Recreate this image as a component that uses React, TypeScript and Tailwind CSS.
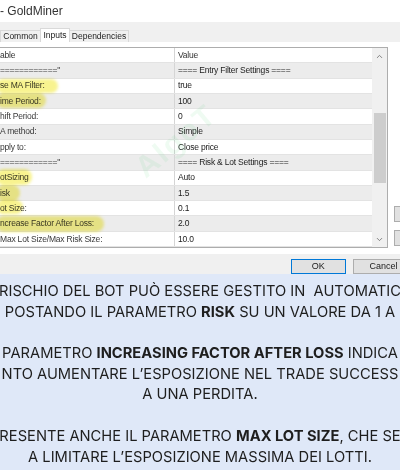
import { ChevronUp, ChevronDown } from 'lucide-react';

type Row = { name: string; value: string };

const rows: Row[] = [
  { name: '============"', value: '==== Entry Filter Settings ====' },
  { name: 'se MA Filter:', value: 'true' },
  { name: 'ime Period:', value: '100' },
  { name: 'hift Period:', value: '0' },
  { name: 'A method:', value: 'Simple' },
  { name: 'pply to:', value: 'Close price' },
  { name: '============"', value: '==== Risk & Lot Settings ====' },
  { name: 'otSizing', value: 'Auto' },
  { name: 'isk', value: '1.5' },
  { name: 'ot Size:', value: '0.1' },
  { name: 'ncrease Factor After Loss:', value: '2.0' },
  { name: 'Max Lot Size/Max Risk Size:', value: '10.0' },
];

// evidenziatore giallo sopra le righe
const marks = [
  'left-[-4px] top-[31px] w-[62px] h-[14px]',
  'left-[-4px] top-[45px] w-[50px] h-[15px]',
  'left-[-4px] top-[121px] w-[36px] h-[16px]',
  'left-[-4px] top-[137px] w-[24px] h-[16px]',
  'left-[-4px] top-[152px] w-[27px] h-[14px]',
  'left-[-4px] top-[168px] w-[108px] h-[16px]',
];

const Dialog = () => (
  <div className="flex flex-col bg-white font-['Liberation_Sans',Arial,sans-serif] text-[#222]">
    <div className="h-[22px] flex items-center text-[12px] text-[#333]">- GoldMiner</div>

    <div className="h-[20px] bg-[#f0f0f0] flex items-end text-[8.5px]">
      <div className="h-[12px] w-[41px] border border-b-0 border-[#d9d9d9] bg-[#f0f0f0] flex items-center justify-center">Common</div>
      <div className="h-[14px] w-[30px] bg-white border border-b-0 border-[#d9d9d9] flex items-center justify-center -mx-px">Inputs</div>
      <div className="h-[12px] w-[60px] border border-b-0 border-[#d9d9d9] bg-[#f0f0f0] flex items-center justify-center">Dependencies</div>
    </div>

    <div className="h-[5px]" />

    <div className="flex">
      <div className="relative w-[388px] h-[201px] border-t border-r border-b border-[#adadad] flex overflow-hidden">
        <div className="w-[372px] flex flex-col text-[8.5px] tracking-[-0.2px]">
          <div className="h-[15.4px] flex items-center border-b border-[#e3e3e3]">
            <div className="w-[175px] border-r border-[#d5d5d5] h-full flex items-center text-[#333]">able</div>
            <div className="pl-[3px] text-[#333]">Value</div>
          </div>
          {rows.map((r, i) => (
            <div
              key={i}
              className={`h-[15.4px] flex items-center border-b border-[#e3e3e3] ${i % 2 === 0 ? 'bg-[#ececec]' : 'bg-white'}`}
            >
              <div className="w-[175px] border-r border-[#d5d5d5] h-full flex items-center whitespace-nowrap text-[#3a3a3a]">{r.name}</div>
              <div className="pl-[3px] whitespace-nowrap text-[#222]">{r.value}</div>
            </div>
          ))}
        </div>

        <div className="w-[15px] bg-[#f0f0f0] flex flex-col items-center">
          <ChevronUp size={9} strokeWidth={2} className="mt-[4px] text-[#606060]" />
          <div className="mt-[52px] w-[12px] h-[70px] bg-[#cdcdcd]" />
          <ChevronDown size={9} strokeWidth={2} className="mt-auto mb-[3px] text-[#606060]" />
        </div>

        {marks.map((m, i) => (
          <div key={i} className={`absolute ${m} bg-[#f6ef6a]/75 rounded-full blur-[1.5px] mix-blend-multiply`} />
        ))}

        <div className="absolute left-[128px] top-[70px] -rotate-[40deg] text-[30px] font-bold text-[#3ecf6a] opacity-[0.08] tracking-[2px]">
          AlgoT
        </div>
      </div>

      <div className="flex-1 relative">
        <div className="absolute left-[6px] top-[159px] w-[10px] h-[16px] bg-[#e1e1e1] border border-[#adadad]" />
        <div className="absolute left-[6px] top-[183px] w-[10px] h-[16px] bg-[#e1e1e1] border border-[#adadad]" />
      </div>
    </div>

    <div className="h-[6px] bg-white" />
    <div className="h-[20px] bg-[#f0f0f0] flex items-end text-[9px]">
      <div className="ml-[291px] w-[59px] h-[15px] border border-[#0078d7] bg-[#e1e1e1] flex items-center justify-center">OK</div>
      <div className="ml-[7px] w-[50px] h-[15px] border border-[#adadad] border-r-0 bg-[#e1e1e1] flex items-center justify-start pl-[16px]">Cancel</div>
    </div>
  </div>
);

const lines: React.ReactNode[] = [
  <>RISCHIO DEL BOT PUÒ ESSERE GESTITO IN&nbsp; AUTOMATIC</>,
  <>POSTANDO IL PARAMETRO <b>RISK</b> SU UN VALORE DA 1 A</>,
  null,
  <>PARAMETRO <b>INCREASING FACTOR AFTER LOSS</b> INDICA</>,
  <>NTO AUMENTARE L’ESPOSIZIONE NEL TRADE SUCCESS</>,
  <>A UNA PERDITA.</>,
  null,
  <>RESENTE ANCHE IL PARAMETRO <b>MAX LOT SIZE</b>, CHE SE</>,
  <>A LIMITARE L’ESPOSIZIONE MASSIMA DEI LOTTI.</>,
];

export default function App() {
  return (
    <div className="w-[400px] h-[470px] overflow-hidden flex flex-col bg-[#dfe8f8]">
      <Dialog />
      <div className="flex-1 pt-[7px] font-['Inter',sans-serif] text-[14.7px] text-[#1e1e1e] leading-[20.7px] overflow-hidden">
        {lines.map((l, i) => (
          <div key={i} className="h-[20.7px] flex justify-center whitespace-nowrap">
            <span>{l}</span>
          </div>
        ))}
      </div>
    </div>
  );
}
